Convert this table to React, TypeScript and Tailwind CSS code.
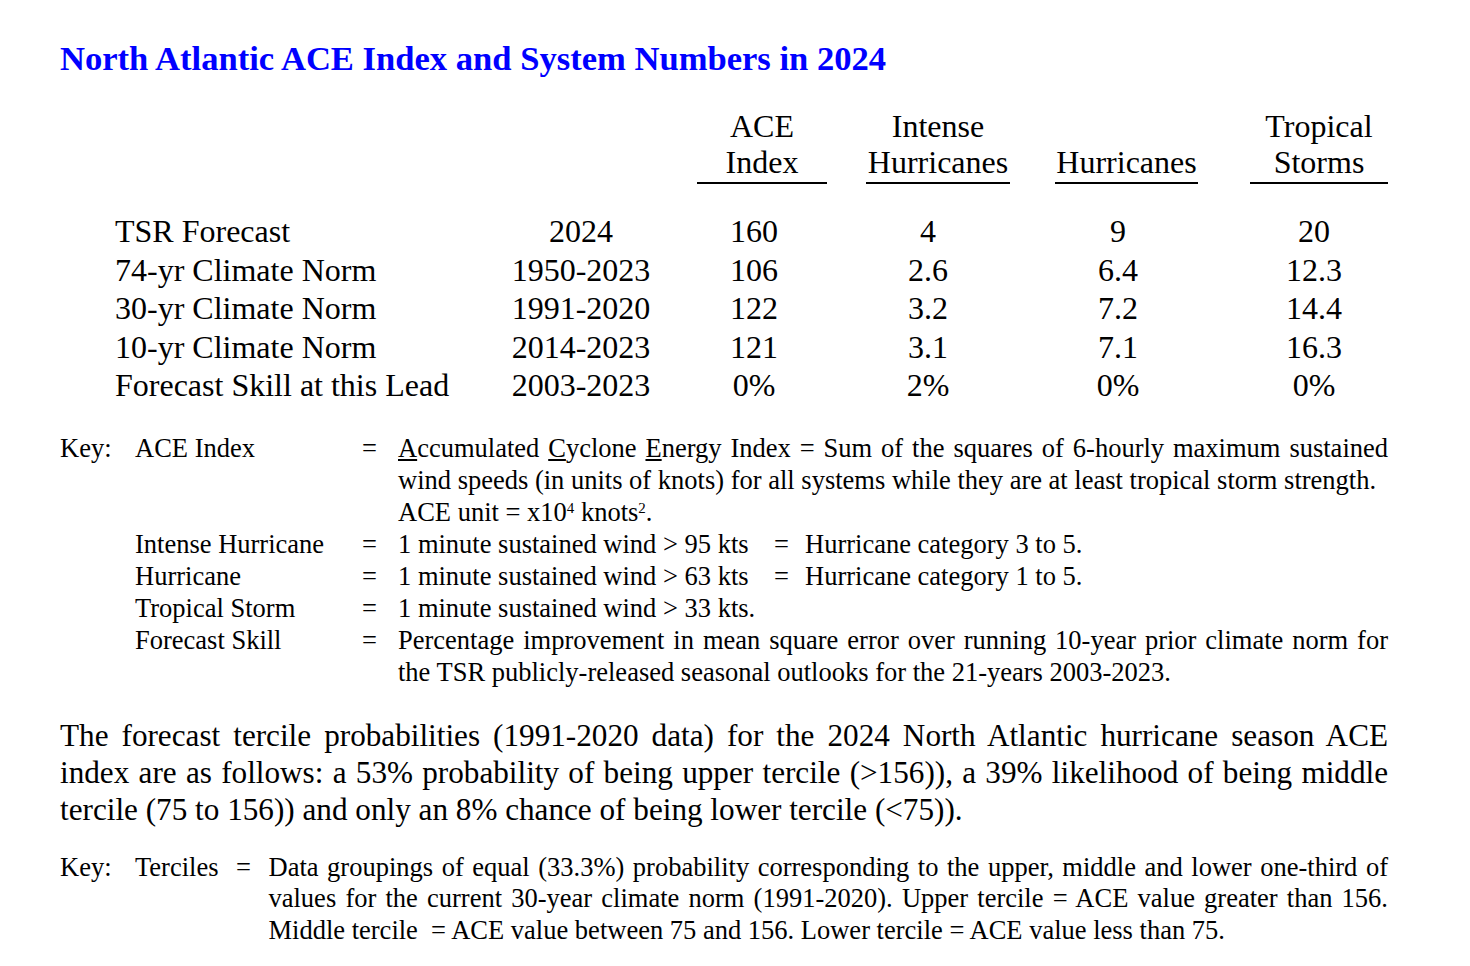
const headers = [
  { lines: ['ACE', 'Index'], cls: 'w-[130px]' },
  { lines: ['Intense', 'Hurricanes'], cls: 'w-[144px] ml-[39px]' },
  { lines: ['', 'Hurricanes'], cls: 'w-[143px] ml-[45px]' },
  { lines: ['Tropical', 'Storms'], cls: 'w-[138px] ml-[52px]' },
];

const rows = [
  ['TSR Forecast', '2024', '160', '4', '9', '20'],
  ['74-yr Climate Norm', '1950-2023', '106', '2.6', '6.4', '12.3'],
  ['30-yr Climate Norm', '1991-2020', '122', '3.2', '7.2', '14.4'],
  ['10-yr Climate Norm', '2014-2023', '121', '3.1', '7.1', '16.3'],
  ['Forecast Skill at this Lead', '2003-2023', '0%', '2%', '0%', '0%'],
];

function KeyRow({ keyText, label, children }: { keyText?: string; label: string; children: React.ReactNode }) {
  return (
    <div className="flex">
      <div className="w-[75px] shrink-0">{keyText}</div>
      <div className="w-[227px] shrink-0">{label}</div>
      <div className="w-[36px] shrink-0">=</div>
      <div className="flex-1 text-justify">{children}</div>
    </div>
  );
}

export default function App() {
  return (
    <div className="min-h-screen bg-white font-['Liberation_Serif',serif] text-black">
      <div className="w-[1388px] pl-[60px] pt-[38px]">
        <h1 className="text-[34.6px] leading-[40px] font-bold text-[#0000ff]">
          North Atlantic ACE Index and System Numbers in 2024
        </h1>

        {/* table header */}
        <div className="mt-[30px] flex pl-[637px] text-[32px] leading-[36px]">
          {headers.map((h, i) => (
            <div key={i} className={`${h.cls} border-b-2 border-black pb-[2px] text-center`}>
              <div className="h-[36px]">{h.lines[0]}</div>
              <div>{h.lines[1]}</div>
            </div>
          ))}
        </div>

        {/* table rows */}
        <div className="mt-[28px] text-[32px] leading-[38.5px]">
          {rows.map((r) => (
            <div key={r[0]} className="flex">
              <div className="w-[441px] shrink-0 whitespace-nowrap pl-[55px]">{r[0]}</div>
              <div className="w-[160px] shrink-0 text-center">{r[1]}</div>
              <div className="ml-[33px] w-[120px] shrink-0 text-center">{r[2]}</div>
              <div className="ml-[54px] w-[120px] shrink-0 text-center">{r[3]}</div>
              <div className="ml-[70px] w-[120px] shrink-0 text-center">{r[4]}</div>
              <div className="ml-[76px] w-[120px] shrink-0 text-center">{r[5]}</div>
            </div>
          ))}
        </div>

        {/* key */}
        <div className="mt-[27px] text-[26.5px] leading-[32px]">
          <KeyRow keyText="Key:" label="ACE Index">
            <span className="underline">A</span>ccumulated <span className="underline">C</span>yclone{' '}
            <span className="underline">E</span>nergy Index = Sum of the squares of 6-hourly maximum sustained wind
            speeds (in units of knots) for all systems while they are at least tropical storm strength.
            <br />
            ACE unit = x10<sup className="text-[15px]">4</sup> knots<sup className="text-[15px]">2</sup>.
          </KeyRow>
          <KeyRow label="Intense Hurricane">
            <span className="inline-block w-[376px]">1 minute sustained wind &gt; 95 kts</span>
            <span className="inline-block w-[31px]">=</span>
            Hurricane category 3 to 5.
          </KeyRow>
          <KeyRow label="Hurricane">
            <span className="inline-block w-[376px]">1 minute sustained wind &gt; 63 kts</span>
            <span className="inline-block w-[31px]">=</span>
            Hurricane category 1 to 5.
          </KeyRow>
          <KeyRow label="Tropical Storm">1 minute sustained wind &gt; 33 kts.</KeyRow>
          <KeyRow label="Forecast Skill">
            Percentage improvement in mean square error over running 10-year prior climate norm for the TSR
            publicly-released seasonal outlooks for the 21-years 2003-2023.
          </KeyRow>
        </div>

        <p className="mt-[29px] text-justify text-[31.2px] leading-[37px]">
          The forecast tercile probabilities (1991-2020 data) for the 2024 North Atlantic hurricane season ACE index
          are as follows: a 53% probability of being upper tercile (&gt;156)), a 39% likelihood of being middle
          tercile (75 to 156)) and only an 8% chance of being lower tercile (&lt;75)).
        </p>

        <div className="mt-[24px] flex text-[26.5px] leading-[31.5px]">
          <div className="w-[75px] shrink-0">Key:</div>
          <div className="shrink-0">Terciles</div>
          <div className="w-[50px] shrink-0 text-center">=</div>
          <div className="flex-1 text-justify">
            Data groupings of equal (33.3%) probability corresponding to the upper, middle and lower one-third of
            values for the current 30-year climate norm (1991-2020). Upper tercile = ACE value greater than 156.
            Middle tercile&nbsp; = ACE value between 75 and 156. Lower tercile = ACE value less than 75.
          </div>
        </div>
      </div>
    </div>
  );
}
